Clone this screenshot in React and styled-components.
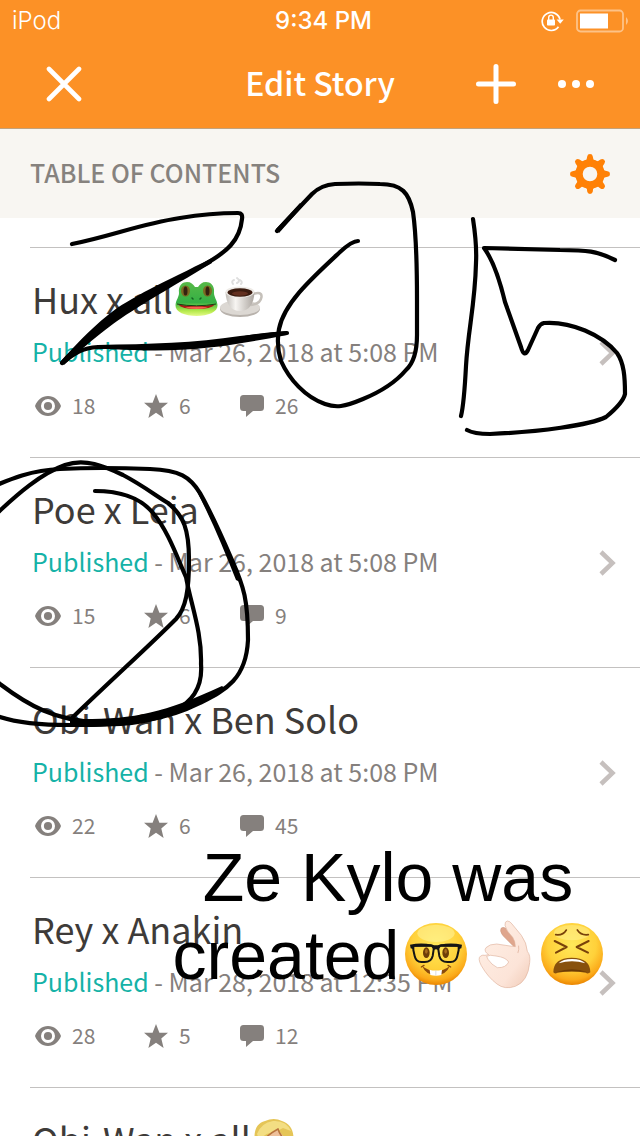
import React from 'react';
import styled, { createGlobalStyle } from 'styled-components';

const GlobalStyle = createGlobalStyle`
  * {
    box-sizing: border-box;
  }

  body {
    margin: 0;
    background: #fff;
    font-family: "Noto Sans CJK SC", "Noto Sans", sans-serif;
  }
`;

const Screen = styled.div`
  position: relative;
  height: 100vh;
  overflow: hidden;
`;

const Header = styled.header`
  background: #fc9126;
  border-bottom: 1px solid #c2a27c;
  color: #fff;
`;

const StatusBar = styled.div`
  display: grid;
  grid-template-columns: 1fr auto 1fr;
  align-items: center;
  height: 40px;
  padding: 0 11px 0 12px;
  font-family: "Inter", sans-serif;
  font-size: 24px;
  line-height: 42px;
`;

const Carrier = styled.span`
  font-weight: 300;
`;

const Clock = styled.span`
  padding-left: 6px;
  font-weight: 500;
`;

const StatusIcons = styled.div`
  display: flex;
  justify-content: flex-end;
  align-items: center;
  gap: 12px;
`;

const NavBar = styled.nav`
  display: grid;
  grid-template-columns: 1fr auto 1fr;
  align-items: center;
  height: 88px;
  padding: 0 24px;
`;

const NavTitle = styled.h1`
  margin: 0;
  padding-bottom: 4px;
  font-size: 32px;
  line-height: 44px;
  font-weight: 500;
`;

const NavActions = styled.div`
  display: flex;
  justify-content: ${(props) => (props.$end ? 'flex-end' : 'flex-start')};
`;

const IconButton = styled.button`
  display: flex;
  align-items: center;
  justify-content: center;
  width: ${(props) => props.$width || 80}px;
  height: 80px;
  padding: 0;
  border: 0;
  background: none;
  color: inherit;
  cursor: pointer;
`;

const SectionBar = styled.div`
  display: flex;
  align-items: center;
  justify-content: space-between;
  height: 89px;
  padding: 0 30px;
  background: #f8f6f2;
  color: #ff8106;
`;

const SectionTitle = styled.h2`
  margin: 0;
  padding-bottom: 3px;
  color: #86827e;
  font-size: 25px;
  line-height: 36px;
  font-weight: 500;
`;

const ChapterList = styled.ul`
  margin: 0;
  padding: 29px 0 0 30px;
  list-style: none;
`;

const ChapterLink = styled.a`
  display: flex;
  align-items: center;
  padding: 0 24px 0 2px;
  border-top: 1px solid #c3c1c0;
  color: #85807d;
  text-decoration: none;
`;

const ChapterBody = styled.div`
  flex: 1;
  padding: 26px 0 38px;
`;

const ChapterTitle = styled.h3`
  display: flex;
  align-items: center;
  gap: 2px;
  margin: 0 0 12px;
  color: #3e3b39;
  font-size: 36px;
  line-height: 48px;
  font-weight: 400;
`;

const ChapterStatus = styled.p`
  margin: 0 0 25px;
  font-size: 25px;
  line-height: 34px;
  font-weight: 400;
`;

const Published = styled.span`
  color: #15b2a7;
`;

const Stats = styled.div`
  display: grid;
  grid-template-columns: 109px 96px auto;
  padding-left: 3px;
  font-size: 21px;
  line-height: 24px;
  font-weight: 400;
`;

const Stat = styled.span`
  display: flex;
  align-items: center;
  gap: 11px;
  height: 26px;
`;

const Count = styled.span`
  padding-bottom: 2px;
`;

const Scribble = styled.svg`
  position: absolute;
  top: 0;
  left: 0;
  pointer-events: none;
`;

const Caption = styled.p`
  position: absolute;
  top: 838px;
  left: 136px;
  right: 0;
  margin: 0;
  color: #000;
  font-family: "Liberation Sans", Arial, sans-serif;
  font-size: 68px;
  line-height: 78px;
  text-align: center;
  pointer-events: none;
`;

const CaptionEmoji = styled.svg`
  width: 62px;
  height: 64px;
  margin-left: 6px;
  overflow: visible;
  vertical-align: -7px;
`;

function LockIcon() {
  return (
    <svg width="23" height="22" viewBox="0 0 23 22" fill="none">
      <path d="M17.5 16.8A9 9 0 1 1 19 9.5" stroke="#fff" strokeWidth="1.7" />
      <path d="M15.6 9.5h7.2l-3.6 4.3z" fill="#fff" />
      <rect x="6" y="9.5" width="8" height="6" rx="0.8" fill="#fff" />
      <path d="M7.7 10V7.4a2.3 2.3 0 0 1 4.6 0V10" stroke="#fff" strokeWidth="1.4" />
    </svg>
  );
}

function BatteryIcon() {
  return (
    <svg width="53" height="24" viewBox="0 0 53 24" fill="none">
      <rect x="1" y="1.5" width="46" height="21" rx="3.5" stroke="#fff" strokeOpacity="0.45" strokeWidth="1.8" />
      <rect x="4" y="4.5" width="28" height="15" fill="#fff" />
      <path d="M50 8q4 4 0 8z" fill="#fff" fillOpacity="0.45" />
    </svg>
  );
}

function CloseIcon() {
  return (
    <svg width="36" height="36" viewBox="0 0 36 36" stroke="#fff" strokeWidth="4.6" strokeLinecap="round">
      <path d="M3 3l30 30M33 3L3 33" />
    </svg>
  );
}

function PlusIcon() {
  return (
    <svg width="40" height="40" viewBox="0 0 40 40" stroke="#fff" strokeWidth="5" strokeLinecap="round">
      <path d="M20 2.5v35M2.5 20h35" />
    </svg>
  );
}

function MoreIcon() {
  return (
    <svg width="36" height="8" viewBox="0 0 36 8" fill="#fff">
      <circle cx="4" cy="4" r="4" />
      <circle cx="18" cy="4" r="4" />
      <circle cx="32" cy="4" r="4" />
    </svg>
  );
}

function GearIcon() {
  return (
    <svg width="40" height="40" viewBox="0 0 40 40">
      <circle cx="20" cy="20" r="11" fill="none" stroke="currentColor" strokeWidth="7.4" />
      {[0, 45, 90, 135, 180, 225, 270, 315].map((angle) => (
        <path
          key={angle}
          d="M15 7.5Q17 6 17.2 2.4Q17.5 0 20 0Q22.5 0 22.8 2.4Q23 6 25 7.5z"
          fill="currentColor"
          transform={`rotate(${angle} 20 20)`}
        />
      ))}
    </svg>
  );
}

function EyeIcon() {
  return (
    <svg width="26" height="20" viewBox="0 0 26 20" fill="currentColor">
      <path
        fillRule="evenodd"
        d="M13 0C7 0 2.2 4 0 10c2.2 6 7 10 13 10s10.8-4 13-10C23.8 4 19 0 13 0zm0 3a7 7 0 1 1 0 14 7 7 0 0 1 0-14z"
      />
      <circle cx="13" cy="10" r="4.1" />
    </svg>
  );
}

function StarIcon() {
  return (
    <svg width="24" height="24" viewBox="0 0 24 24" fill="currentColor">
      <path d="M12 0l3.4 8.7 8.6.1-6.7 5.7L19.6 24 12 18.7 4.4 24l2.3-9.5L0 8.8l8.6-.1z" />
    </svg>
  );
}

function CommentIcon() {
  return (
    <svg width="24" height="22" viewBox="0 0 24 22" fill="currentColor">
      <path d="M3.5 0h17A3.5 3.5 0 0 1 24 3.5v9a3.5 3.5 0 0 1-3.5 3.5H13l-7 6v-6H3.5A3.5 3.5 0 0 1 0 12.5v-9A3.5 3.5 0 0 1 3.5 0z" />
    </svg>
  );
}

function ChevronIcon() {
  return (
    <svg width="17" height="26" viewBox="0 0 17 26" fill="none" stroke="#c6c0be" strokeWidth="4.5">
      <path d="M2 2l11.5 11L2 24" />
    </svg>
  );
}

function FrogEmoji() {
  return (
    <svg width="43" height="40" viewBox="0 -3 43 40" role="img" aria-label="frog">
      <defs>
        <linearGradient id="frog" x1="0" y1="0" x2="0" y2="1">
          <stop offset="0" stopColor="#57b947" />
          <stop offset="0.6" stopColor="#35b045" />
          <stop offset="0.85" stopColor="#b5e94b" />
          <stop offset="1" stopColor="#e4fb8a" />
        </linearGradient>
      </defs>
      <path
        d="M4 12C3 4 8 1 12 1c4 0 6 2 8 5h3c2-3 4-5 8-5 4 0 9 3 8 11 0 4 3 7 3.5 12C43 31 33 35 21.5 35S0 31 .5 24C1 19 4 16 4 12z"
        fill="url(#frog)"
      />
      <ellipse cx="10.5" cy="10" rx="4.5" ry="5.5" fill="#7a6a22" />
      <ellipse cx="32.5" cy="10" rx="4.5" ry="5.5" fill="#7a6a22" />
      <ellipse cx="10.5" cy="10" rx="2" ry="4.5" fill="#35210f" />
      <ellipse cx="32.5" cy="10" rx="2" ry="4.5" fill="#35210f" />
      <path d="M17 17l1 1M26 17l-1 1" stroke="#146322" strokeWidth="1.5" strokeLinecap="round" />
      <path d="M3 23.5q18.5 3 37 0Q36 28 21.5 28T3 23.5z" fill="#a91914" />
      <path d="M10 26.5q11.5-2 23 0-11.5 3-23 0z" fill="#f4614e" />
      <path d="M2 23q19.5 3.5 39 0" fill="none" stroke="#173d12" strokeWidth="1" />
    </svg>
  );
}

function CoffeeEmoji() {
  return (
    <svg width="43" height="44" viewBox="0 0 43 44" role="img" aria-label="coffee">
      <defs>
        <linearGradient id="cup" x1="0" y1="0" x2="1" y2="0">
          <stop offset="0" stopColor="#c1bdb8" />
          <stop offset="0.35" stopColor="#f7f5f2" />
          <stop offset="1" stopColor="#aaa49e" />
        </linearGradient>
      </defs>
      <path
        d="M13 8q-2-3 1-4M17 7q4-2 0-5M21 8q2-2-1-4"
        fill="none"
        stroke="#dedede"
        strokeWidth="2"
        strokeLinecap="round"
      />
      <ellipse cx="20" cy="33" rx="20" ry="8" fill="#b8b2ac" />
      <ellipse cx="20" cy="31.5" rx="20" ry="7.5" fill="#dcd8d3" />
      <path d="M33 18q9-3 8.5 3-1 7-11 8" fill="none" stroke="#c5c0ba" strokeWidth="2.5" />
      <path d="M5.5 16C6 28 11 35 20 35s14-7 14.5-19z" fill="url(#cup)" />
      <ellipse cx="20" cy="16" rx="14.5" ry="5.5" fill="#eeebe7" />
      <ellipse cx="20" cy="16.5" rx="12.5" ry="4.2" fill="#3b1c10" />
      <ellipse cx="20" cy="17.5" rx="8" ry="2.2" fill="#633020" />
    </svg>
  );
}

function BlondEmoji() {
  return (
    <svg width="43" height="40" viewBox="0 0 43 40" role="img" aria-label="blond person">
      <path d="M2 26C0 12 4 5 12 3q9-4 17 0c9 3 13 11 11 23v14H2z" fill="#e5c557" />
      <path d="M4 16Q8 5 20 3q13-1 18 10l-8-3q-6 4-13 5T7 24z" fill="#f3de83" />
      <path d="M9 25Q14 17 24 12q6 4 10 12v16H9z" fill="#eec09a" />
      <path d="M8 25q6-8 17-14 2 7 10 14" fill="none" stroke="#b9743e" strokeWidth="1.5" />
    </svg>
  );
}

function FaceGradient({ id }) {
  return (
    <defs>
      <radialGradient id={id} cx="0.5" cy="0.35" r="0.65">
        <stop offset="0" stopColor="#ffe85a" />
        <stop offset="0.6" stopColor="#ffd13a" />
        <stop offset="0.87" stopColor="#fbaa1a" />
        <stop offset="1" stopColor="#ea8500" />
      </radialGradient>
    </defs>
  );
}

function NerdEmoji() {
  return (
    <CaptionEmoji viewBox="47 66 186 192" role="img" aria-label="nerd face">
      <FaceGradient id="nerd" />
      <circle cx="140" cy="162" r="93" fill="url(#nerd)" />
      <ellipse cx="140" cy="100" rx="56" ry="26" fill="#fff8a8" opacity="0.5" />
      <ellipse cx="111" cy="158" rx="10" ry="16" fill="#6d3d08" />
      <ellipse cx="169" cy="158" rx="10" ry="16" fill="#6d3d08" />
      <ellipse cx="111" cy="154" rx="4" ry="7" fill="#a76a1d" />
      <ellipse cx="169" cy="154" rx="4" ry="7" fill="#a76a1d" />
      <g fill="none" stroke="#151515" strokeWidth="6" strokeLinejoin="round">
        <path d="M72 137L124 136Q134 137 133 148L130 168Q126 186 106 186L96 186Q80 186 76 168L72 150Z" />
        <path d="M208 137L156 136Q146 137 147 148L150 168Q154 186 174 186L184 186Q200 186 204 168L208 150Z" />
      </g>
      <path
        d="M62 134Q96 127 128 134Q140 138 152 134Q184 127 218 134L216 145L209 147L206 140L154 140L146 149Q140 146 134 149L126 140L74 140L71 147L64 145Z"
        fill="#151515"
      />
      <path d="M99 199q41 30 82 0-10 26-41 26t-41-26z" fill="#8a4a0c" />
      <path d="M121 209q18 5 37 0l-2 16q-16 5-33 0z" fill="#fff" />
      <path d="M139.5 211v16" stroke="#c9cbd0" strokeWidth="2" />
      <path d="M96 201l8-5M176 196l8 5" stroke="#8a4a0c" strokeWidth="4" strokeLinecap="round" />
    </CaptionEmoji>
  );
}

function HandEmoji() {
  return (
    <CaptionEmoji viewBox="251 66 186 192" role="img" aria-label="ok hand">
      <defs>
        <linearGradient id="skin" x1="0" y1="0" x2="1" y2="1">
          <stop offset="0" stopColor="#fff0e6" />
          <stop offset="0.7" stopColor="#fce4d8" />
          <stop offset="1" stopColor="#f0cab6" />
        </linearGradient>
      </defs>
      <path
        d="M384 150L340 106Q330 92 336 84Q346 78 356 92L386 132Z"
        fill="#dfa68d"
        stroke="#cf9a80"
        strokeWidth="2"
      />
      <path
        fillRule="evenodd"
        d="M347 76Q346 64 354 63Q362 63 368 72L396 106Q412 128 414 154Q424 166 421 188Q416 244 378 259Q346 270 323 252Q296 232 276 197Q264 174 274 168Q280 164 287 166L298 164Q282 154 290 143Q300 132 322 132L362 138L378 140Q378 124 370 112Q350 92 347 76ZM292 169Q300 163 320 168Q350 172 358 186Q350 204 324 203Q306 194 296 178Z"
        fill="url(#skin)"
        stroke="#dfb49f"
        strokeWidth="2"
      />
      <path d="M388 138q2 10-2 20" fill="none" stroke="#dba993" strokeWidth="2" strokeLinecap="round" />
    </CaptionEmoji>
  );
}

function TiredEmoji() {
  return (
    <CaptionEmoji viewBox="455 66 186 192" role="img" aria-label="tired face">
      <FaceGradient id="tired" />
      <circle cx="548" cy="162" r="93" fill="url(#tired)" />
      <ellipse cx="548" cy="98" rx="54" ry="23" fill="#fff8a8" opacity="0.4" />
      <g fill="none" stroke="#79420a" strokeLinecap="round" strokeLinejoin="round">
        <path d="M499 104q22 3 32-14M597 104q-22 3-33-14" strokeWidth="5" />
        <path d="M496 123l36 18-32 17M598 123l-36 18 34 17" strokeWidth="6" />
      </g>
      <path d="M492 217q0-43 55-44 56 1 56 44-7 6-14 1-42-7-84 0-9 5-13-1z" fill="#88510c" />
      <path d="M508 190q12-13 40-13t40 13q-40-12-80 0z" fill="#fff" />
      <path d="M503 216q45-16 90 0-45-5-90 0z" fill="#6b3a05" />
    </CaptionEmoji>
  );
}

const chapters = [
  { title: 'Hux x all', emoji: [FrogEmoji, CoffeeEmoji], date: 'Mar 26, 2018 at 5:08 PM', views: 18, stars: 6, comments: 26 },
  { title: 'Poe x Leia', date: 'Mar 26, 2018 at 5:08 PM', views: 15, stars: 6, comments: 9 },
  { title: 'Obi-Wan x Ben Solo', date: 'Mar 26, 2018 at 5:08 PM', views: 22, stars: 6, comments: 45 },
  { title: 'Rey x Anakin', date: 'Mar 28, 2018 at 12:35 PM', views: 28, stars: 5, comments: 12 },
  { title: 'Obi-Wan x all', emoji: [BlondEmoji], date: 'Mar 28, 2018 at 12:35 PM', views: 20, stars: 5, comments: 8 },
];

function Chapter({ chapter }) {
  return (
    <li>
      <ChapterLink href="#">
        <ChapterBody>
          <ChapterTitle>
            {chapter.title}
            {(chapter.emoji || []).map((Emoji, i) => (
              <Emoji key={i} />
            ))}
          </ChapterTitle>
          <ChapterStatus>
            <Published>Published</Published> - {chapter.date}
          </ChapterStatus>
          <Stats>
            <Stat>
              <EyeIcon />
              <Count>{chapter.views}</Count>
            </Stat>
            <Stat>
              <StarIcon />
              <Count>{chapter.stars}</Count>
            </Stat>
            <Stat>
              <CommentIcon />
              <Count>{chapter.comments}</Count>
            </Stat>
          </Stats>
        </ChapterBody>
        <ChevronIcon />
      </ChapterLink>
    </li>
  );
}

function Drawing() {
  return (
    <Scribble
      width="640"
      height="1136"
      viewBox="0 0 640 1136"
      fill="none"
      stroke="#000"
      strokeWidth="4.2"
      strokeLinecap="round"
      strokeLinejoin="round"
      aria-hidden="true"
    >
      {/* 2 */}
      <path d="M72 244C112 236 140 224 180 218C204 214 225 213 238 213Q243 213 242 219C240 240 228 252 200 267C165 286 132 302 110 319C90 335 75 350 62 363C75 353 82 348 98 347L150 347C195 347 215 344 240 339Q265 334 287 333" />
      {/* heavier parts of the pen strokes */}
      <g fill="#000" stroke="none">
        <path d="M212 258C165 282 130 297 108 315C88 331 73 348 60 362L64 365C78 352 92 340 113 324C135 308 165 291 212 263Z" />
        <path d="M98 345C150 344 195 343 240 336L287 331L287 335C240 344 200 351 150 350.500C120 350 105 349 98 349Z" />
        <path d="M276 229L300 203L303 206L279 233Z" />
        <path d="M196 485C212 512 222 535 232 557L240 582L236 580C224 550 212 520 196 490Z" />
        <path d="M70 719C130 720 160 715 222 686L226 689C180 716 140 728 70 727Z" />
      </g>
      {/* 0 */}
      <path d="M277 231L312 194Q321 185 335 184Q360 183 380 184C402 184 409 193 413 212C417 240 417 270 417 300L417 335Q417 360 406 370C395 383 380 392 363 399C344 407 336 408 325 404C305 397 289 379 281 361Q276 345 279 329C284 303 312 278 340 252Q352 241 358 241" />
      {/* 1 */}
      <path d="M473 219Q477 245 476 263C475 305 468 330 466 366Q464 404 461 416" />
      {/* 5 */}
      <path d="M615 260C597 251 587 250 560 250L484 248C493 260 499 277 505 302L521 347Q524 358 528 350L538 328Q540 324 544 323C571 321 602 335 617 353C624 363 625 377 625 394Q623 403 606 417C590 425 540 432 490 434Q474 434 467 430" />
      {/* circles */}
      <path d="M95 491Q135 491 153 513C169 532 178 560 186 577C191 605 202 632 201 664C203 690 190 702 175 711C150 724 120 725 70 725Q24 725 0 717" />
      <path d="M-10 488C10 479 32 470 60 469Q100 467 150 469C180 470 190 477 200 493C212 514 222 537 232 560C244 587 248 600 248 640C246 680 225 690 200 703C160 723 130 722 95 722C55 720 29 706 0 684L-10 676" />
      <path d="M-10 520C18 493 42 473 65 465C85 458 104 466 123 475C142 485 155 495 168 503C184 516 189 530 189 560C189 590 186 608 176 619C150 645 120 672 73 717" />
    </Scribble>
  );
}

function App() {
  return (
    <Screen>
      <GlobalStyle />
      <Header>
        <StatusBar>
          <Carrier>iPod</Carrier>
          <Clock>9:34 PM</Clock>
          <StatusIcons>
            <LockIcon />
            <BatteryIcon />
          </StatusIcons>
        </StatusBar>
        <NavBar>
          <NavActions>
            <IconButton aria-label="Close">
              <CloseIcon />
            </IconButton>
          </NavActions>
          <NavTitle>Edit Story</NavTitle>
          <NavActions $end>
            <IconButton aria-label="Add">
              <PlusIcon />
            </IconButton>
            <IconButton aria-label="More">
              <MoreIcon />
            </IconButton>
          </NavActions>
        </NavBar>
      </Header>

      <SectionBar>
        <SectionTitle>TABLE OF CONTENTS</SectionTitle>
        <IconButton $width={40} aria-label="Settings">
          <GearIcon />
        </IconButton>
      </SectionBar>

      <ChapterList>
        {chapters.map((chapter) => (
          <Chapter key={chapter.title} chapter={chapter} />
        ))}
      </ChapterList>

      <Drawing />

      <Caption>
        Ze Kylo was
        <br />
        created
        <NerdEmoji />
        <HandEmoji />
        <TiredEmoji />
      </Caption>
    </Screen>
  );
}

export default App;
